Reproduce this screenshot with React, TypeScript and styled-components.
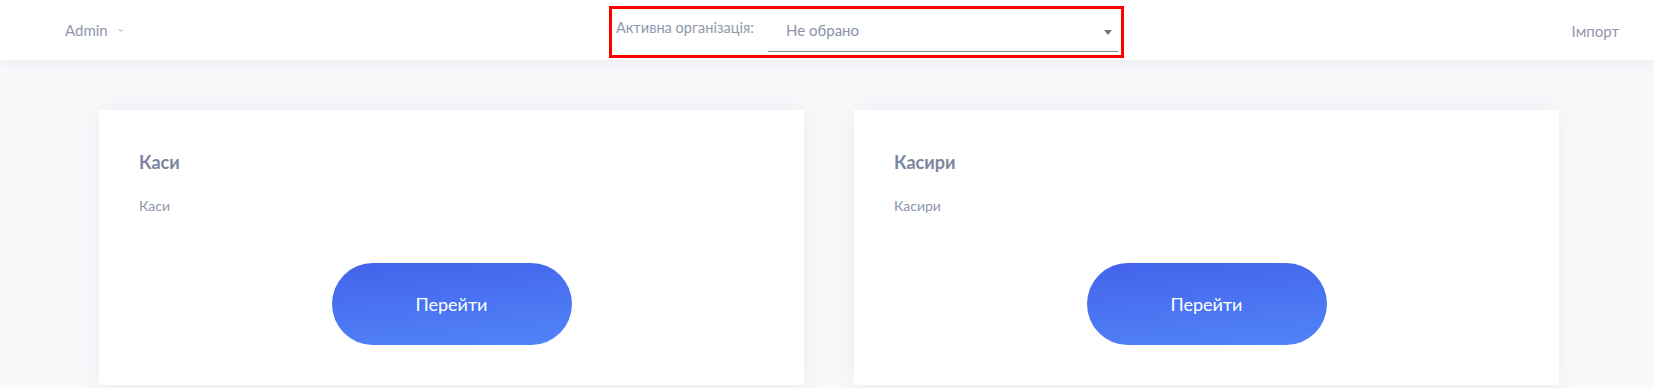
import React from "react";
import styled, { createGlobalStyle } from "styled-components";

const GlobalStyle = createGlobalStyle`
  html, body {
    margin: 0;
    padding: 0;
    background: #f8f9fb;
    font-family: Lato, "Open Sans", sans-serif;
  }
  * { box-sizing: border-box; }
`;

const Page = styled.div`
  width: 1654px;
  height: 388px;
  overflow: hidden;
  background: #f8f9fb;
`;

const Header = styled.header`
  position: relative;
  z-index: 1;
  height: 60px;
  background: #ffffff;
  box-shadow: 0 2px 14px rgba(40, 50, 80, 0.07);
  display: flex;
  align-items: center;
  padding: 0 35px 0 65px;
`;

const UserMenu = styled.div`
  display: flex;
  align-items: center;
  gap: 10px;
  width: 58px;
  color: #8e96ab;
  font-size: 15px;
  margin-top: -1px;
`;

const Chevron = styled.svg`
  width: 7px;
  height: 5px;
  margin-top: 1px;
`;

const OrgBox = styled.div`
  margin-left: 486px;
  width: 515px;
  height: 52px;
  margin-top: 4px;
  border: 3px solid #ff0000;
  display: flex;
  align-items: flex-start;
  padding: 0 3px 0 4px;
`;

const OrgLabel = styled.span`
  color: #9098ac;
  font-size: 14.6px;
  margin-top: 10px;
  width: 152px;
  flex: none;
`;

const Select = styled.div`
  position: relative;
  width: 350px;
  flex: none;
  height: 43px;
  border-bottom: 1px solid #8a8a8a;
  display: flex;
  align-items: center;
  padding: 0 0 0 18px;
  color: #8a92a8;
  font-size: 15px;
`;

const Caret = styled.span`
  position: absolute;
  right: 6px;
  top: 21px;
  width: 0;
  height: 0;
  border-left: 4px solid transparent;
  border-right: 4px solid transparent;
  border-top: 5px solid #767676;
`;

const ImportLink = styled.a`
  margin-left: auto;
  color: #8e96ab;
  font-size: 15px;
  text-decoration: none;
  margin-top: 1px;
`;

const Cards = styled.main`
  display: grid;
  grid-template-columns: 705px 705px;
  gap: 50px;
  padding: 50px 0 0 99px;
`;

const Card = styled.section`
  background: #ffffff;
  height: 275px;
  box-shadow: 0 0 22px rgba(40, 50, 80, 0.07);
  display: flex;
  flex-direction: column;
  padding: 40px 40px 40px 40px;
`;

const CardTitle = styled.h3`
  margin: 0;
  height: 24px;
  line-height: 24px;
  color: #7d86a0;
  font-size: 18px;
  font-weight: 700;
`;

const CardText = styled.p`
  margin: 22px 0 0;
  height: 20px;
  line-height: 20px;
  color: #8e96ab;
  font-size: 14px;
`;

const GoButton = styled.button`
  align-self: center;
  margin-top: auto;
  width: 240px;
  height: 82px;
  border: none;
  border-radius: 41px;
  background: linear-gradient(175deg, #4363ea 0%, #5184f9 100%);
  color: #ffffff;
  font-family: Lato, "Open Sans", sans-serif;
  font-size: 18px;
  cursor: pointer;
`;

const cards = [
  { title: "Каси", text: "Каси" },
  { title: "Касири", text: "Касири" },
];

export default function App() {
  return (
    <Page>
      <GlobalStyle />
      <Header>
        <UserMenu>
          Admin
          <Chevron viewBox="0 0 7 5">
            <path d="M1 1l2.5 2.5L6 1" fill="none" stroke="#8e96ab" strokeWidth="1.2" />
          </Chevron>
        </UserMenu>
        <OrgBox>
          <OrgLabel>Активна організація:</OrgLabel>
          <Select>
            Не обрано
            <Caret />
          </Select>
        </OrgBox>
        <ImportLink href="#">Імпорт</ImportLink>
      </Header>
      <Cards>
        {cards.map((c) => (
          <Card key={c.title}>
            <CardTitle>{c.title}</CardTitle>
            <CardText>{c.text}</CardText>
            <GoButton>Перейти</GoButton>
          </Card>
        ))}
      </Cards>
    </Page>
  );
}
